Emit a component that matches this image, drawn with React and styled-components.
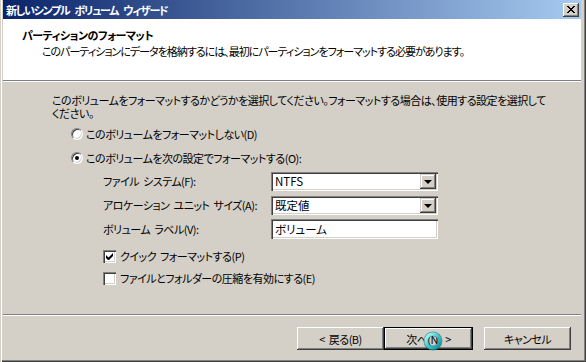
import React from 'react';
import styled, { createGlobalStyle } from 'styled-components';

const FACE = '#d4d0c8';
const FONT = `"Noto Sans CJK JP", "Noto Sans", sans-serif`;

const Global = createGlobalStyle`
  html, body { margin: 0; padding: 0; background: ${FACE}; }
  body {
    font-family: ${FONT};
    font-size: 11px;
    letter-spacing: -0.5px;
    word-spacing: 2px;
    color: #000;
    font-feature-settings: "palt";
  }
  * { box-sizing: border-box; }
`;

const Window = styled.div`
  position: relative;
  width: 586px;
  height: 362px;
  background: ${FACE};
  padding: 0 5px 2px 3px;
  box-shadow: inset 1px 0 ${FACE}, inset 2px 0 #fff, inset -1px -1px #404040,
    inset -2px -2px #808080;
  display: flex;
  flex-direction: column;
  overflow: hidden;
`;

const TitleBar = styled.div`
  height: 19px;
  flex: none;
  display: flex;
  align-items: center;
  justify-content: space-between;
  padding: 0 2px 0 3px;
  background: linear-gradient(to right, #0a246a, #a6caf0);
`;

const TitleText = styled.span`
  color: #fff;
  font-weight: bold;
  line-height: 14px;
  letter-spacing: -1.3px;
  word-spacing: 4px;
  white-space: nowrap;
`;

const CloseButton = styled.div`
  width: 16px;
  height: 14px;
  background: ${FACE};
  box-shadow: inset -1px -1px #404040, inset 1px 1px #fff, inset -2px -2px #808080;
  display: flex;
  align-items: center;
  justify-content: center;
`;

const Header = styled.div`
  flex: none;
  height: 62px;
  background: #fff;
  padding: 9px 0 0 19px;
  border-bottom: 1px solid #808080;
  box-shadow: 0 1px #fff;
  margin-bottom: 1px;
`;

const HeaderTitle = styled.div`
  font-weight: bold;
  line-height: 15px;
  white-space: nowrap;
`;

const HeaderSub = styled.div`
  line-height: 15px;
  padding-left: 20px;
  margin-top: 1px;
  letter-spacing: -1px;
  white-space: nowrap;
`;

const Body = styled.div`
  flex: 1;
  padding: 12px 0 0 49px;
  display: flex;
  flex-direction: column;
`;

const Para = styled.div`
  line-height: 13px;
  white-space: nowrap;
`;

const OptionRow = styled.label`
  display: flex;
  align-items: center;
  gap: ${(p) => p.$gap || 3}px;
  height: 16px;
  margin-top: ${(p) => p.$top}px;
  margin-left: ${(p) => p.$indent}px;
  white-space: pre;
  line-height: 16px;
`;

const Radio = styled.span`
  width: 12px;
  height: 12px;
  border-radius: 50%;
  flex: none;
  background: #fff;
  border: 1px solid;
  border-color: #808080 #fff #fff #808080;
  box-shadow: inset 1px 1px #404040, inset -1px -1px ${FACE};
  display: flex;
  align-items: center;
  justify-content: center;
  &::after {
    content: '';
    width: 4px;
    height: 4px;
    border-radius: 50%;
    background: ${(p) => (p.$on ? '#000' : 'transparent')};
  }
`;

const Check = styled.span`
  width: 13px;
  height: 13px;
  flex: none;
  background: #fff;
  box-shadow: inset 1px 1px #808080, inset 2px 2px #404040, inset -1px -1px #fff,
    inset -2px -2px ${FACE};
  display: flex;
  align-items: center;
  justify-content: center;
`;

const FormGrid = styled.div`
  display: grid;
  grid-template-columns: 168px 167px;
  grid-auto-rows: 20px;
  row-gap: 4px;
  align-items: center;
  margin: 5px 0 0 51px;
`;

const FieldLabel = styled.span`
  white-space: pre;
  line-height: 14px;
`;

const Sunken = styled.div`
  height: ${(p) => p.$h}px;
  background: #fff;
  box-shadow: inset 1px 1px #808080, inset 2px 2px #404040, inset -1px -1px #fff,
    inset -2px -2px ${FACE};
  display: flex;
  align-items: center;
  padding: 2px 2px 2px 4px;
  justify-content: space-between;
  white-space: nowrap;
  font-size: 11.5px;
  letter-spacing: 0;
`;

const DropArrow = styled.div`
  width: 16px;
  height: 15px;
  background: ${FACE};
  box-shadow: inset -1px -1px #404040, inset 1px 1px ${FACE}, inset -2px -2px #808080,
    inset 2px 2px #fff;
  display: flex;
  align-items: center;
  justify-content: center;
  &::after {
    content: '';
    border-left: 4px solid transparent;
    border-right: 4px solid transparent;
    border-top: 4px solid #000;
    margin-top: 1px;
  }
`;

const Separator = styled.div`
  flex: none;
  height: 2px;
  border-top: 1px solid #808080;
  border-bottom: 1px solid #fff;
`;

const Footer = styled.div`
  flex: none;
  height: 44px;
  display: flex;
  justify-content: flex-end;
  align-items: flex-start;
  padding: 11px 10px 0 0;
`;

const Button = styled.div`
  position: relative;
  width: ${(p) => p.$w || 87}px;
  height: 23px;
  margin-left: ${(p) => p.$ml || 0}px;
  background: ${FACE};
  display: flex;
  align-items: center;
  justify-content: center;
  white-space: pre;
  line-height: 14px;
  box-shadow: ${(p) =>
    p.$default
      ? `inset 0 0 0 1px #000, inset -2px -2px #404040, inset 2px 2px #fff, inset -3px -3px #808080`
      : `inset -1px -1px #404040, inset 1px 1px #fff, inset -2px -2px #808080`};
`;

const BusyCursor = styled.svg`
  position: absolute;
  left: 423px;
  top: 331px;
  pointer-events: none;
`;

export default function App() {
  return (
    <>
      <Global />
      <Window>
        <TitleBar>
          <TitleText>新しいシンプル ボリューム ウィザード</TitleText>
          <CloseButton>
            <svg width="8" height="7" viewBox="0 0 8 7">
              <path d="M0 0h2v1h1v1h2V1h1V0h2v1H7v1H6v1H5v1h1v1h1v1h1v1H6V6H5V5H3v1H2v1H0V6h1V5h1V4h1V3H2V2H1V1H0z" fill="#000" />
            </svg>
          </CloseButton>
        </TitleBar>
        <Header>
          <HeaderTitle>パーティションのフォーマット</HeaderTitle>
          <HeaderSub>このパーティションにデータを格納するには、最初にパーティションをフォーマットする必要があります。</HeaderSub>
        </Header>
        <Body>
          <Para>このボリュームをフォーマットするかどうかを選択してください。フォーマットする場合は、使用する設定を選択して</Para>
          <Para>ください。</Para>
          <OptionRow $top={6} $indent={19}>
            <Radio />
            このボリュームをフォーマットしない(D)
          </OptionRow>
          <OptionRow $top={8} $indent={19}>
            <Radio $on />
            このボリュームを次の設定でフォーマットする(O):
          </OptionRow>
          <FormGrid>
            <FieldLabel>ファイル システム(F):</FieldLabel>
            <Sunken $h={19}>
              NTFS
              <DropArrow />
            </Sunken>
            <FieldLabel>アロケーション ユニット サイズ(A):</FieldLabel>
            <Sunken $h={19}>
              既定値
              <DropArrow />
            </Sunken>
            <FieldLabel>ボリューム ラベル(V):</FieldLabel>
            <Sunken $h={20}>ボリューム</Sunken>
          </FormGrid>
          <OptionRow $top={9} $indent={51} $gap={4}>
            <Check>
              <svg width="7" height="7" viewBox="0 0 7 7">
                <path d="M0 2v3l2 2h1l4-4V0L2.5 4.5z" fill="#000" />
              </svg>
            </Check>
            クイック フォーマットする(P)
          </OptionRow>
          <OptionRow $top={6} $indent={51} $gap={4}>
            <Check />
            ファイルとフォルダーの圧縮を有効にする(E)
          </OptionRow>
        </Body>
        <Separator />
        <Footer>
          <Button>{'< 戻る(B)'}</Button>
          <Button $default $w={89}>{'次へ(N) >'}</Button>
          <Button $ml={11}>キャンセル</Button>
        </Footer>
        <BusyCursor width="20" height="20" viewBox="0 0 20 20">
          <defs>
            <linearGradient id="ring" x1="0" y1="0" x2="1" y2="1">
              <stop offset="0" stopColor="#b9fbf7" />
              <stop offset="0.5" stopColor="#3cc9cf" />
              <stop offset="1" stopColor="#0f8fa0" />
            </linearGradient>
          </defs>
          <circle cx="10" cy="10" r="7" fill="none" stroke="#0b5e6b" strokeWidth="5" opacity="0.6" />
          <circle cx="10" cy="10" r="7" fill="none" stroke="url(#ring)" strokeWidth="3.4" />
        </BusyCursor>
      </Window>
    </>
  );
}
